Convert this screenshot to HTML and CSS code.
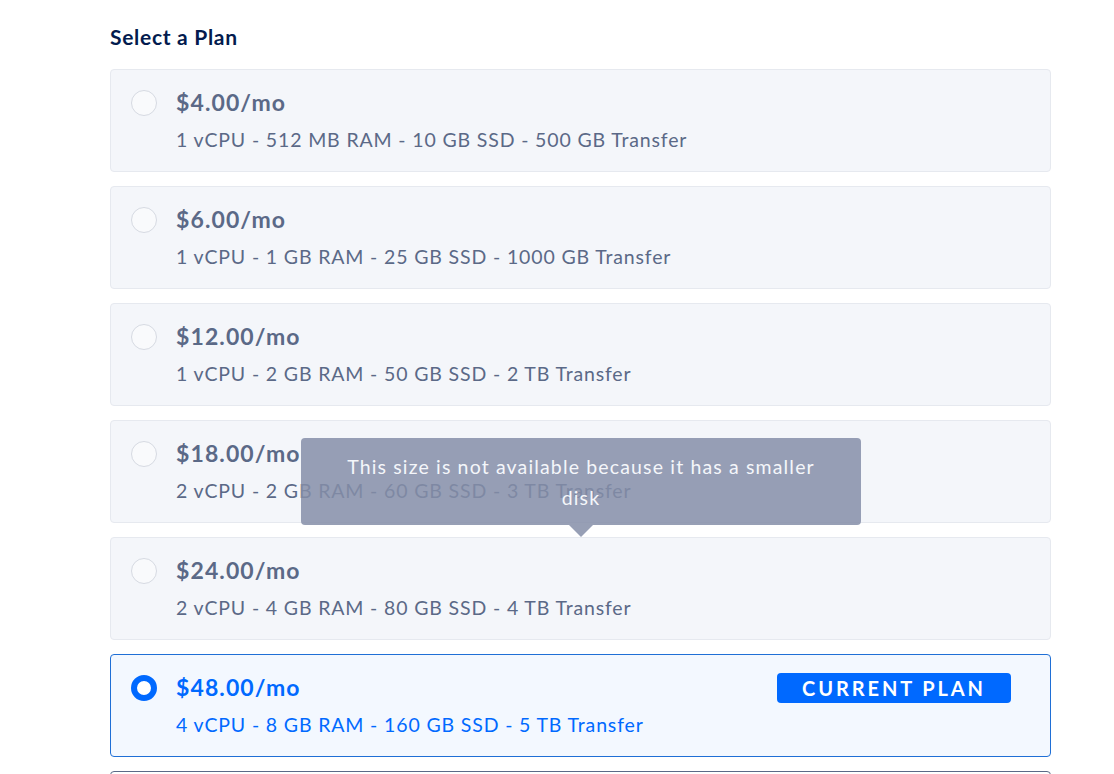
FILE: index.html
```html
<!DOCTYPE html>
<html>
<head>
<meta charset="utf-8">
<link rel="stylesheet" href="styles.css">
</head>
<body>
<div class="page">
  <h2 class="title">Select a Plan</h2>
  <div class="plans">
    <div class="plan">
      <span class="radio"></span>
      <div class="info"><div class="price">$4.00/mo</div><div class="spec">1 vCPU - 512 MB RAM - 10 GB SSD - 500 GB Transfer</div></div>
    </div>
    <div class="plan">
      <span class="radio"></span>
      <div class="info"><div class="price">$6.00/mo</div><div class="spec">1 vCPU - 1 GB RAM - 25 GB SSD - 1000 GB Transfer</div></div>
    </div>
    <div class="plan">
      <span class="radio"></span>
      <div class="info"><div class="price">$12.00/mo</div><div class="spec">1 vCPU - 2 GB RAM - 50 GB SSD - 2 TB Transfer</div></div>
    </div>
    <div class="plan has-tip">
      <span class="radio"></span>
      <div class="info"><div class="price">$18.00/mo</div><div class="spec">2 vCPU - 2 GB RAM - 60 GB SSD - 3 TB Transfer</div></div>
      <div class="tooltip">This size is not available because it has a smaller<br>disk</div>
    </div>
    <div class="plan">
      <span class="radio"></span>
      <div class="info"><div class="price">$24.00/mo</div><div class="spec">2 vCPU - 4 GB RAM - 80 GB SSD - 4 TB Transfer</div></div>
    </div>
    <div class="plan selected">
      <span class="radio"></span>
      <div class="info"><div class="price">$48.00/mo</div><div class="spec">4 vCPU - 8 GB RAM - 160 GB SSD - 5 TB Transfer</div></div>
      <span class="badge">CURRENT PLAN</span>
    </div>
    <div class="plan next"></div>
  </div>
</div>
</body>
</html>
```
FILE: styles.css
```css
html, body {
  margin: 0;
  padding: 0;
  background: #ffffff;
  overflow: hidden;
}
body {
  font-family: Lato, "Open Sans", sans-serif;
  color: #5b6987;
}
.page {
  padding: 24px 63px 0 110px;
}
.title {
  margin: 0 0 20px 0;
  font-size: 21px;
  line-height: 25px;
  font-weight: 700;
  letter-spacing: 0.7px;
  color: #031b4e;
}
.plans {
  display: flex;
  flex-direction: column;
  gap: 14px;
}
.plan {
  position: relative;
  display: flex;
  align-items: flex-start;
  gap: 19px;
  height: 103px;
  box-sizing: border-box;
  padding: 18px 20px 19px 20px;
  background: #f4f6fa;
  border: 1px solid #e6e9ef;
  border-radius: 4px;
}
.radio {
  flex: none;
  width: 26px;
  height: 26px;
  margin-top: 2px;
  box-sizing: border-box;
  border-radius: 50%;
  border: 1px solid #d6dae2;
  background: #f9fafc;
}
.info {
  flex: 1;
}
.price {
  font-size: 23px;
  line-height: 29px;
  font-weight: 700;
  letter-spacing: 1.1px;
  color: #5b6987;
}
.spec {
  margin-top: 10px;
  font-size: 19.5px;
  line-height: 26px;
  letter-spacing: 0.85px;
  color: #5b6987;
}
.selected {
  background: #f3f8ff;
  border-color: #1f6fd6;
}
.selected .radio {
  border: 6px solid #0069ff;
  background: #ffffff;
}
.selected .price,
.selected .spec {
  color: #0069ff;
}
.badge {
  flex: none;
  align-self: flex-start;
  margin-top: 0;
  margin-right: 19px;
  width: 234px;
  height: 30px;
  box-sizing: border-box;
  display: flex;
  align-items: center;
  justify-content: center;
  background: #0069ff;
  color: #ffffff;
  font-size: 20px;
  font-weight: 700;
  letter-spacing: 2.9px;
  border-radius: 4px;
}
.next {
  background: #ffffff;
  border-color: #5b6987;
}
.tooltip {
  position: absolute;
  left: 190px;
  top: 17px;
  width: 560px;
  height: 87px;
  box-sizing: border-box;
  padding: 13px 20px 0 20px;
  background: rgba(133, 142, 168, 0.85);
  color: #f4f6fa;
  font-size: 19.5px;
  line-height: 31px;
  letter-spacing: 1.15px;
  text-align: center;
  border-radius: 4px;
  z-index: 2;
}
.tooltip::after {
  content: "";
  position: absolute;
  left: 268px;
  bottom: -12px;
  width: 0;
  height: 0;
  border-left: 12px solid transparent;
  border-right: 12px solid transparent;
  border-top: 12px solid rgba(133, 142, 168, 0.85);
}
```
